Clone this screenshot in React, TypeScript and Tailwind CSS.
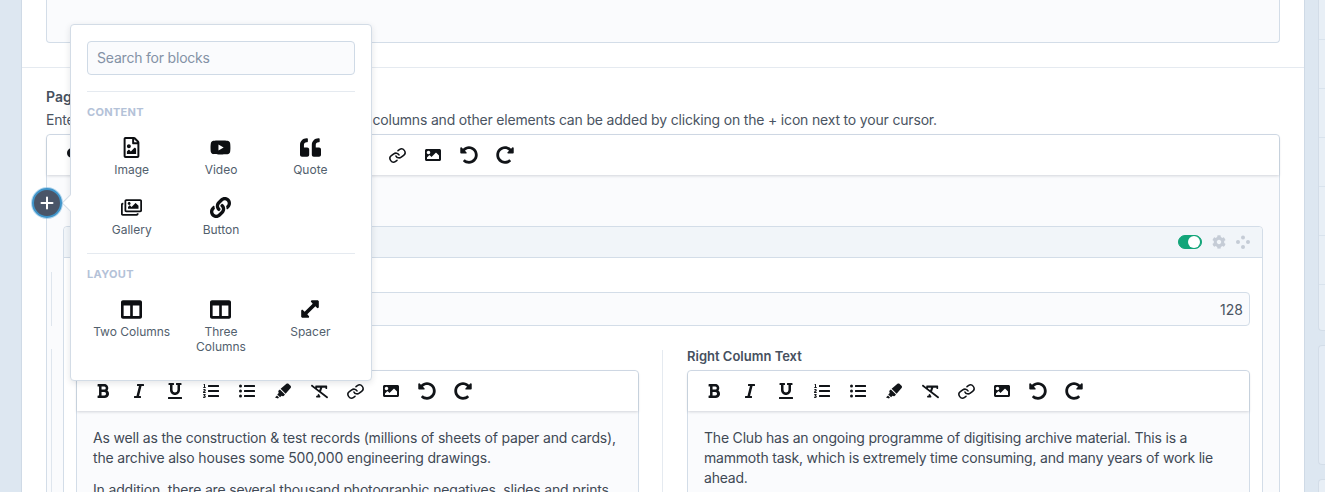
import React from "react";
import {
  FaBold,
  FaItalic,
  FaUnderline,
  FaListOl,
  FaListUl,
  FaHighlighter,
  FaRemoveFormat,
  FaLink,
  FaImage,
  FaUndoAlt,
  FaRedoAlt,
  FaRegFileImage,
  FaYoutube,
  FaQuoteLeft,
  FaRegImages,
  FaColumns,
  FaArrowsAltH,
  FaCog,
  FaHeading,
  FaParagraph,
} from "react-icons/fa";
import { FiLink } from "react-icons/fi";

const Tool = ({ children }: { children: React.ReactNode }) => (
  <div className="w-9 h-10 flex items-center justify-center text-[16px] text-[#111418]">
    {children}
  </div>
);

const Toolbar = ({ extra }: { extra?: boolean }) => (
  <div className="h-10 px-2 flex items-center bg-white rounded-t shadow-[0_1px_3px_rgba(30,41,59,0.18)] shrink-0">
    {extra && <Tool><FaParagraph /></Tool>}
    {extra && <Tool><FaHeading /></Tool>}
    <Tool><FaBold /></Tool>
    <Tool><FaItalic /></Tool>
    <Tool><FaUnderline /></Tool>
    <Tool><FaListOl /></Tool>
    <Tool><FaListUl /></Tool>
    <Tool><FaHighlighter /></Tool>
    <Tool><FaRemoveFormat className="text-[17px]" /></Tool>
    <Tool><FiLink className="text-[17px] rotate-[8deg]" strokeWidth={2.2} /></Tool>
    <Tool><FaImage /></Tool>
    <Tool><FaUndoAlt className="text-[18px]" /></Tool>
    <Tool><FaRedoAlt className="text-[18px]" /></Tool>
  </div>
);

const BlockItem = ({ icon, label }: { icon: React.ReactNode; label: string }) => (
  <div className="flex flex-col items-center text-center text-[12px] leading-[15px] text-[#52606d] h-[60px] px-[3px]">
    <div className="h-[22px] flex items-center justify-center text-[21px] text-[#0d0f12] mb-[4px]">
      {icon}
    </div>
    <div>{label}</div>
  </div>
);

const Popover = () => (
  <div className="absolute left-[48px] top-[24px] w-[302px] h-[357px] bg-white border border-[#d3dce6] rounded shadow-[0_2px_6px_rgba(30,41,59,0.12)] px-4 pt-4 z-20">
    <div className="absolute -left-[7px] top-[172px] w-3 h-3 bg-white border-l border-b border-[#d3dce6] rotate-45" />
    <div className="h-[34px] border border-[#cfdae6] rounded bg-[#fafbfd] flex items-center px-[9px] pb-px text-[14px] tracking-[-0.2px] text-[#8492a6]">
      Search for blocks
    </div>
    <div className="h-px bg-[#e5eaf0] mt-4" />
    <div className="text-[11px] leading-4 font-bold tracking-[0.3px] text-[#b4c2d8] mt-[12px] mb-[16px]">CONTENT</div>
    <div className="grid grid-cols-3">
      <BlockItem icon={<FaRegFileImage />} label="Image" />
      <BlockItem icon={<FaYoutube />} label="Video" />
      <BlockItem icon={<FaQuoteLeft />} label="Quote" />
      <BlockItem icon={<FaRegImages />} label="Gallery" />
      <BlockItem icon={<FaLink />} label="Button" />
    </div>
    <div className="h-px bg-[#e5eaf0] -mt-[3px]" />
    <div className="text-[11px] leading-4 font-bold tracking-[0.3px] text-[#b4c2d8] mt-[12px] mb-[16px]">LAYOUT</div>
    <div className="grid grid-cols-3">
      <BlockItem icon={<FaColumns />} label="Two Columns" />
      <BlockItem icon={<FaColumns />} label="Three Columns" />
      <BlockItem icon={<FaArrowsAltH className="-rotate-45 text-[24px]" />} label="Spacer" />
    </div>
  </div>
);

const Dots = () => (
  <svg width="14" height="14" viewBox="0 0 14 14" fill="#c5ccd6">
    <circle cx="7" cy="2.5" r="2" />
    <circle cx="2" cy="7" r="2" />
    <circle cx="12" cy="7" r="2" />
    <circle cx="7" cy="12" r="2" />
  </svg>
);

const App = () => {
  return (
    <div className="relative w-[1325px] h-[492px] overflow-hidden flex bg-[#dde7f1] text-[14px] text-[#4a5462] font-['Inter',sans-serif]">
      <div className="w-[22px] shrink-0 border-r border-[#cfdae6]" />
      <main className="relative w-[1283px] shrink-0 bg-white border-r border-[#cfdae6]">
        <div className="h-[68px] border-b border-[#e5eaf0] px-6">
          <div className="h-[43px] bg-[#fafbfd] border-x border-b border-[#d3dde8] rounded-b" />
        </div>
        <div className="px-6 pt-[20px]">
          <div className="font-semibold leading-[18px] text-[#46505e]">Page Content</div>
          <div className="mt-[4px] leading-[20px] tracking-[-0.18px]">
            Enter the main body for this page. Images, videos, columns and other elements can be added by clicking on the + icon next to your cursor.
          </div>
          <div className="mt-[4px] border border-[#d3dde8] rounded-t bg-[#fafbfd] h-[400px]">
            <Toolbar extra />
            <div className="mx-4 mt-[51px] border border-[#d3dde8] rounded-t bg-white">
              <div className="h-[31px] bg-[#f1f5f9] border-b border-[#d3dde8] rounded-t flex items-center justify-end gap-[10px] pr-[12px]">
                <div className="w-6 h-[14px] rounded-full bg-[#12a579] flex justify-end items-center pr-px border border-[#12a579]">
                  <div className="w-3 h-3 rounded-full bg-white" />
                </div>
                <FaCog className="text-[14px] text-[#c5ccd6]" />
                <Dots />
              </div>
              <div className="relative px-[12px] pt-[34px] h-[67px]">
                <div className="absolute -left-[13px] top-[14px] h-[54px] w-px bg-[#dfe6ee]" />
                <div className="h-[34px] border border-[#d3dde8] rounded bg-[#fafbfd] flex items-center justify-end px-[6px] text-[#4a5462]">128</div>
              </div>
              <div className="relative px-[12px] pt-[23px] flex">
                <div className="absolute -left-[13px] top-[24px] h-[200px] w-px bg-[#dfe6ee]" />
                <div className="w-[563px] shrink-0">
                  <div className="text-[13px] leading-[16px] font-semibold text-[#46505e] mb-[6px]">Left Column Text</div>
                  <div className="border border-[#d3dde8] rounded-t bg-[#fafbfd] h-[200px]">
                    <Toolbar />
                    <div className="px-4 pt-[17px] leading-[20px] tracking-[-0.17px] text-[#3f4955]">
                      <p>As well as the construction &amp; test records (millions of sheets of paper and cards), the archive also houses some 500,000 engineering drawings.</p>
                      <p className="mt-[12px]">In addition, there are several thousand photographic negatives, slides and prints</p>
                    </div>
                  </div>
                </div>
                <div className="ml-[23px] mr-6 mt-[2px] w-px h-[200px] bg-[#e5eaf0] shrink-0" />
                <div className="w-[563px] shrink-0">
                  <div className="text-[13px] leading-[16px] font-semibold text-[#46505e] mb-[6px]">Right Column Text</div>
                  <div className="border border-[#d3dde8] rounded-t bg-[#fafbfd] h-[200px]">
                    <Toolbar />
                    <div className="px-4 pt-[17px] leading-[20px] tracking-[-0.2px] text-[#3f4955]">
                      <p>The Club has an ongoing programme of digitising archive material. This is a mammoth task, which is extremely time consuming, and many years of work lie ahead.</p>
                    </div>
                  </div>
                </div>
              </div>
            </div>
          </div>
        </div>
        <Popover />
        <div className="absolute left-[10px] top-[188px] w-[30px] h-[30px] rounded-full bg-[#4a5568] border-2 border-[#3f94c9] shadow-[0_0_0_1px_rgba(96,170,220,0.45)] flex items-center justify-center z-30">
          <svg width="14" height="14" viewBox="0 0 14 14" stroke="white" strokeWidth="2" strokeLinecap="round">
            <path d="M7 1.5v11M1.5 7h11" />
          </svg>
        </div>
      </main>
      <aside className="flex-1 pl-[13px] flex flex-col gap-[14px]">
        <div className="h-[331px] shrink-0 bg-[#e8eff6] border-l border-b border-[#d3dde8] rounded-bl">
          <div className="h-[40px] border-b border-[#d9e3ed]" />
          {[0, 1, 2, 3, 4].map((i) => (
            <div key={i} className="h-[49px] border-b border-[#d9e3ed]" />
          ))}
        </div>
        <div className="h-[120px] shrink-0 bg-[#e4ecf5] border-l border-y border-[#d3dde8] rounded-l" />
        <div className="h-[60px] shrink-0 bg-[#e8eff6] border-l border-t border-[#d3dde8] rounded-tl" />
      </aside>
    </div>
  );
};

export default App;
